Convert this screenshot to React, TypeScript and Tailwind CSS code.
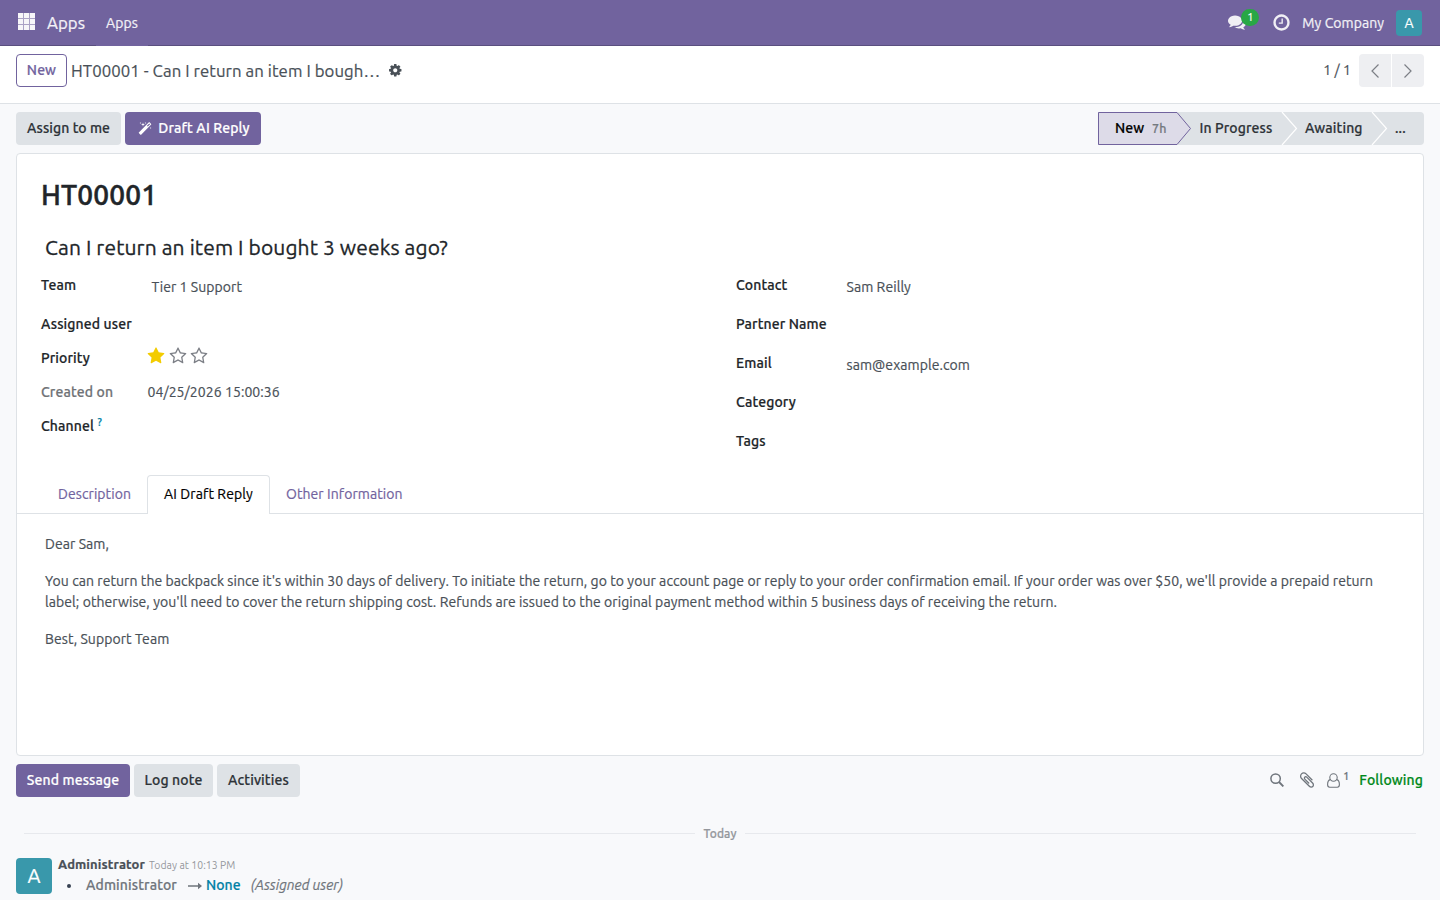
import type { ReactNode } from 'react';

type IconProps = { d: string; className?: string };

function Glyph({ d, className }: IconProps) {
  return (
    <svg viewBox="0 0 1792 1792" fill="currentColor" className={className}>
      <path d={d} />
    </svg>
  );
}

const COMMENTS =
  'M1408 768q0 139-94 257t-256.5 186.5-353.5 68.5q-86 0-176-16-124 88-278 128-36 9-86 16h-3q-11 0-20.5-8t-11.5-21q-1-3-1-6.5t.5-6.5 2-6l2.5-5 3.5-5.5 4-5 4.5-5 4-4.5q5-6 23-25t26-29.5 22.5-29 25-38.5 20.5-44q-124-72-195-177t-71-224q0-139 94-257t256.5-186.5 353.5-68.5 353.5 68.5 256.5 186.5 94 257zm384 256q0 120-71 224.5t-195 176.5q10 24 20.5 44t25 38.5 22.5 29 26 29.5 23 25q1 1 4 4.5t4.5 5 4 5 3.5 5.5l2.5 5 2 6 .5 6.5-1 6.5q-3 14-13 22t-22 7q-50-7-86-16-154-40-278-128-90 16-176 16-271 0-472-132 58 4 88 4 161 0 309-45t264-129q125-92 192-212t67-254q0-77-23-152 129 71 204 178t75 230z';
const CLOCK =
  'M1024 544v448q0 14-9 23t-23 9h-320q-14 0-23-9t-9-23v-64q0-14 9-23t23-9h224v-352q0-14 9-23t23-9h64q14 0 23 9t9 23zm416 352q0-148-73-273t-198-198-273-73-273 73-198 198-73 273 73 273 198 198 273 73 273-73 198-198 73-273zm224 0q0 209-103 385.5t-279.5 279.5-385.5 103-385.5-103-279.5-279.5-103-385.5 103-385.5 279.5-279.5 385.5-103 385.5 103 279.5 279.5 103 385.5z';
const COG =
  'M1152 896q0-106-75-181t-181-75-181 75-75 181 75 181 181 75 181-75 75-181zm512-109v222q0 12-8 23t-20 13l-185 28q-19 54-39 91 35 50 107 138 10 12 10 25t-9 23q-27 37-99 108t-94 71q-12 0-26-9l-138-108q-44 23-91 38-16 136-29 186-7 28-36 28h-222q-14 0-24.5-8.5t-11.5-21.5l-28-184q-49-16-90-37l-141 107q-10 9-25 9-14 0-25-11-126-114-165-168-7-10-7-23 0-12 8-23 15-21 51-66.5t54-70.5q-27-50-41-99l-183-27q-13-2-21-12.5t-8-23.5v-222q0-12 8-23t19-13l186-28q14-46 39-92-40-57-107-138-10-12-10-24 0-10 9-23 26-36 98.5-107.5t94.5-71.5q13 0 26 10l138 107q44-23 91-38 16-136 29-186 7-28 36-28h222q14 0 24.5 8.5t11.5 21.5l28 184q49 16 90 37l142-107q9-9 24-9 13 0 25 10 129 119 165 170 7 8 7 22 0 12-8 23-15 21-51 66.5t-54 70.5q26 50 41 98l183 28q13 2 21 12.5t8 23.5z';
const MAGIC =
  'M1254 581l293-293-107-107-293 293zm447-293q0 27-18 45l-1286 1286q-18 18-45 18t-45-18l-198-198q-18-18-18-45t18-45l1286-1286q18-18 45-18t45 18l198 198q18 18 18 45zm-1351-190l98 30-98 30-30 98-30-98-98-30 98-30 30-98zm350 162l196 60-196 60-60 196-60-196-196-60 196-60 60-196zm930 478l98 30-98 30-30 98-30-98-98-30 98-30 30-98zm-640-640l98 30-98 30-30 98-30-98-98-30 98-30 30-98z';
const STAR =
  'M1728 647q0 22-26 48l-363 354 86 500q1 7 1 20 0 21-10.5 35.5t-30.5 14.5q-19 0-40-12l-449-236-449 236q-22 12-40 12-21 0-31.5-14.5t-10.5-35.5q0-6 2-20l86-500-364-354q-25-27-25-48 0-37 56-46l502-73 225-455q19-41 49-41t49 41l225 455 502 73q56 9 56 46z';
const STAR_O =
  'M1201 1004l306-297-422-62-189-382-189 382-422 62 306 297-73 421 378-199 377 199zm527-357q0 22-26 48l-363 354 86 500q1 7 1 20 0 50-41 50-19 0-40-12l-449-236-449 236q-22 12-40 12-21 0-31.5-14.5t-10.5-35.5q0-6 2-20l86-500-364-354q-25-27-25-48 0-37 56-46l502-73 225-455q19-41 49-41t49 41l225 455 502 73q56 9 56 46z';
const CLIP =
  'M1596 1385q0 117-79 196t-196 79q-135 0-235-100l-777-776q-113-115-113-271 0-159 110-270t269-111q158 0 273 113l605 606q10 10 10 22 0 16-30.5 46.5t-46.5 30.5q-13 0-23-10l-606-607q-79-77-181-77-106 0-179 75t-73 181q0 105 76 181l776 777q63 63 145 63 64 0 106-42t42-106q0-82-63-145l-581-581q-26-24-60-24-29 0-48 19t-19 48q0 32 25 59l410 410q10 10 10 22 0 16-31 47t-47 31q-12 0-22-10l-410-410q-63-61-63-149 0-82 57-139t139-57q88 0 149 63l581 581q100 98 100 235z';

function Navbar() {
  return (
    <header className="flex h-[46px] shrink-0 bg-[#71639e] text-white/90">
      <div className="flex w-24 shrink-0 items-center border-b border-[#5a4f7f] pl-[18px]">
        <svg viewBox="0 0 17 17" className="size-[17px] shrink-0 -translate-y-px" fill="currentColor">
          <rect x="0" y="0" width="17" height="17" opacity=".45" />
          {[0, 6, 12].map((y) => [0, 6, 12].map((x) => <rect key={`${x}-${y}`} x={x} y={y} width="5" height="5" />))}
        </svg>
        <span className="ml-3 text-[16.8px]">Apps</span>
      </div>
      <div className="flex w-[52px] items-center justify-center">Apps</div>
      <div className="flex flex-1 items-center justify-end border-b border-[#5a4f7f] pr-[18px]">
        <div className="relative mr-[26px] h-[18px] w-[18px]">
          <Glyph d={COMMENTS} className="size-[18px] -translate-y-px" />
          <span className="absolute -top-[5px] left-[13px] flex h-[17px] w-[18px] items-center justify-center rounded-full bg-[#28a745] text-[11px] text-white">
            1
          </span>
        </div>
        <Glyph d={CLOCK} className="mr-[11px] size-[19px]" />
        <span className="mr-[12px] pt-px">My Company</span>
        <span className="flex size-[26px] items-center justify-center rounded bg-[#3998ab] pt-px text-white">A</span>
      </div>
    </header>
  );
}

function ControlPanel() {
  return (
    <div className="flex h-[58px] shrink-0 items-start border-b border-[#dee2e6] bg-white px-4 pt-2">
      <button className="h-[33px] w-[51px] rounded border border-[#71639e] font-medium tracking-[0.009em] text-[#71639e]">New</button>
      <span className="ml-1 w-[310px] text-[16.8px] leading-[33px] whitespace-nowrap">HT00001 - Can I return an item I bough…</span>
      <Glyph d={COG} className="mt-[9px] ml-[6.500px] size-[14.5px]" />
      <div className="ml-auto flex items-center">
        <span className="mr-2">1 / 1</span>
        <button className="flex h-[33px] w-8 items-center justify-center rounded-l bg-[#eeeff2]">
          <svg viewBox="0 0 8 14" className="h-[14px] w-2" fill="none" stroke="#7c7f86" strokeWidth="1.2">
            <path d="M7.5.5 1 7l6.500 6.500" />
          </svg>
        </button>
        <button className="ml-px flex h-[33px] w-8 items-center justify-center rounded-r bg-[#eeeff2]">
          <svg viewBox="0 0 8 14" className="h-[14px] w-2" fill="none" stroke="#7c7f86" strokeWidth="1.2">
            <path d="M.5.5 7 7 .5 13.500" />
          </svg>
        </button>
      </div>
    </div>
  );
}

function StatusBar() {
  return (
    <div className="relative ml-auto flex h-[33px] w-[326px] items-center rounded-r-sm bg-[#dee2e6] text-[#2e3338]">
      <svg viewBox="0 0 326 33" className="absolute inset-0 h-[33px] w-[326px]" fill="none">
        <path d="M.5.5h78.500l13.500 16-13.500 16H.5z" fill="#dddbe8" stroke="#71639e" />
        <path d="M184 0l14.500 16.500L184 33M274 0l14.500 16.500L274 33" stroke="#fff" strokeWidth="1.2" />
      </svg>
      <span className="relative ml-[17px] w-[37px] text-black">New</span>
      <span className="relative w-[47.5px] text-[12.5px] text-[#747980]">7h</span>
      <span className="relative w-[105.5px]">In Progress</span>
      <span className="relative w-[90px]">Awaiting</span>
      <span className="relative">...</span>
    </div>
  );
}

function Row({ label, h, lw, muted, children }: { label: ReactNode; h: string; lw: string; muted?: boolean; children?: ReactNode }) {
  return (
    <div className={`flex ${h}`}>
      <div className={`${lw} shrink-0 font-medium leading-[21px] tracking-[0.009em] ${muted ? 'text-[#6f7276]' : 'text-[#212529]'}`}>{label}</div>
      <div className="leading-[21px]">{children}</div>
    </div>
  );
}

function Fields() {
  return (
    <div className="mt-3 flex">
      <div className="w-[695px]">
        <Row label="Team" h="h-[39px]" lw="w-[110.500px]"><span className="relative top-0.5">Tier 1 Support</span></Row>
        <Row label="Assigned user" h="h-[34px]" lw="w-[106.500px]" />
        <Row label="Priority" h="h-[34px]" lw="w-[106px]">
          <div className="-mt-px flex gap-[3.5px] text-[#7c7f86]">
            <Glyph d={STAR} className="size-[18px] text-[#f3cc00]" />
            <Glyph d={STAR_O} className="size-[18px]" />
            <Glyph d={STAR_O} className="size-[18px]" />
          </div>
        </Row>
        <Row label="Created on" h="h-[34px]" lw="w-[106.500px]" muted>04/25/2026 15:00:36</Row>
        <Row label={<>Channel <sup className="-top-[5px] text-[10.500px] leading-none text-[#0180a5]">?</sup></>} h="h-[34px]" lw="w-[106.500px]" />
      </div>
      <div>
        <Row label="Contact" h="h-[39px]" lw="w-[110.500px]"><span className="relative top-0.5">Sam Reilly</span></Row>
        <Row label="Partner Name" h="h-[39px]" lw="w-[110.500px]" />
        <Row label="Email" h="h-[39px]" lw="w-[110.500px]"><span className="relative top-0.5">sam@example.com</span></Row>
        <Row label="Category" h="h-[39px]" lw="w-[110.500px]" />
        <Row label="Tags" h="h-[21px]" lw="w-[110.500px]" />
      </div>
    </div>
  );
}

function Sheet() {
  return (
    <main className="mx-4 mt-2 flex h-[603px] shrink-0 flex-col rounded border border-[#dee2e6] bg-white">
      <div className="h-[321px] shrink-0 px-6 pt-6">
        <h1 className="text-[28px] font-medium leading-[34px] text-[#212529] tracking-[0.006em] [-webkit-text-stroke:0.5px]">HT00001</h1>
        <h2 className="mt-[19px] pl-1 text-[21px] leading-[32px] tracking-[0.0055em] text-[#212529] [-webkit-text-stroke:0.3px]">Can I return an item I bought 3 weeks ago?</h2>
        <Fields />
      </div>
      <nav className="flex h-[39px] shrink-0 items-stretch text-[#71639e]">
        <div className="flex w-[130px] items-center justify-end border-b border-[#dee2e6] pr-4">Description</div>
        <div className="flex w-[123px] items-center justify-center rounded-t border border-b-0 border-[#dee2e6] pb-px tracking-[0.008em] text-black">AI Draft Reply</div>
        <div className="flex flex-1 items-center border-b border-[#dee2e6] pl-4">Other Information</div>
      </nav>
      <article className="space-y-4 pt-5 pl-7 leading-[21px] whitespace-nowrap">
        <p>Dear Sam,</p>
        <p>
          You can return the backpack since it's within 30 days of delivery. To initiate the return, go to your account page or reply to your order confirmation email. If your order was over $50, we'll provide a prepaid return
          <br />
          label; otherwise, you'll need to cover the return shipping cost. Refunds are issued to the original payment method within 5 business days of receiving the return.
        </p>
        <p>Best, Support Team</p>
      </article>
    </main>
  );
}

function Chatter() {
  return (
    <section className="px-4 pt-2">
      <div className="flex h-[33px] items-center gap-1 font-medium tracking-[0.009em]">
        <button className="h-[33px] w-[114px] rounded bg-[#71639e] text-white">Send message</button>
        <button className="h-[33px] w-[79px] rounded bg-[#dee2e6] text-[#2e3338]">Log note</button>
        <button className="h-[33px] w-[83px] rounded bg-[#dee2e6] text-[#2e3338]">Activities</button>
        <div className="ml-auto flex items-center pr-px text-[#6f757c]">
          <svg viewBox="0 0 14 14" className="-mt-0.5 size-[14px]" fill="none" stroke="currentColor" strokeWidth="1.5">
            <circle cx="5.600" cy="5.600" r="4.700" />
            <path d="M9 9l4.400 4.400" strokeWidth="1.900" />
          </svg>
          <Glyph d={CLIP} className="-mt-0.5 ml-[14.500px] size-[18px]" />
          <svg viewBox="0 0 13 15" className="ml-[11px] h-[15px] w-[13px]" fill="none" stroke="currentColor" strokeWidth="1.1">
            <circle cx="6.500" cy="4.500" r="3.700" />
            <path d="M3.300 6.600C1.400 7 .6 9.300.6 11.500c0 1.700.7 2.700 2.100 2.700h7.600c1.400 0 2.100-1 2.100-2.700 0-2.200-.8-4.500-2.700-4.900" />
          </svg>
          <span className="mb-2 ml-[3px] text-[10.500px]">1</span>
          <span className="ml-2.5 text-[#008818]">Following</span>
        </div>
      </div>
      <div className="mx-2 mt-[26px] flex h-[21px] items-center gap-2 text-[12px] font-medium text-[#94979c]">
        <span className="h-px flex-1 bg-[#e7e9ed]" />
        Today
        <span className="h-px flex-1 bg-[#e7e9ed]" />
      </div>
      <div className="mt-[14px] flex">
        <span className="flex size-9 shrink-0 items-center justify-center rounded bg-[#3998ab] pb-px text-[20px] text-white">A</span>
        <div className="ml-1.5">
          <div className="flex h-[13px] items-center text-[13px] font-bold tracking-[0.009em]">
            Administrator
            <span className="ml-1 pt-px text-[10.400px] font-normal tracking-[0.004em] text-[#94979c] [-webkit-text-stroke:0]">Today at 10:13 PM</span>
          </div>
          <div className="mt-1 flex h-[21px] items-center text-[#6f757c]">
            <span className="ml-[9px] size-1 rounded-full bg-[#374151]" />
            <span className="ml-[15px] font-medium tracking-[0.009em]">Administrator</span>
            <svg viewBox="0 0 14 8" className="ml-[11px] h-2 w-[14px]" fill="currentColor">
              <path d="M0 3.300h10V.8L14 4l-4 3.200V4.700H0z" />
            </svg>
            <span className="ml-1 font-medium text-[#0180a5]">None</span>
            <span className="ml-2.5 tracking-normal italic">(Assigned user)</span>
          </div>
        </div>
      </div>
    </section>
  );
}

export default function App() {
  return (
    <div className="flex h-[900px] w-[1440px] flex-col overflow-hidden bg-[#f8f9fb] font-[Ubuntu,'Noto_Sans',sans-serif] text-[14px] leading-[21px] tracking-[0.07px] text-[#495057] [-webkit-text-stroke:0.2px]">
      <Navbar />
      <ControlPanel />
      <div className="mt-2 flex h-[33px] shrink-0 gap-1 px-4 font-medium tracking-[0.009em]">
        <button className="w-[105px] rounded bg-[#dee2e6] tracking-[0.004em] text-[#2e3338]">Assign to me</button>
        <button className="flex w-[136px] items-center justify-center gap-1.5 rounded bg-[#71639e] pl-0.5 text-white">
          <Glyph d={MAGIC} className="size-[14px]" />
          Draft AI Reply
        </button>
        <StatusBar />
      </div>
      <Sheet />
      <Chatter />
    </div>
  );
}
